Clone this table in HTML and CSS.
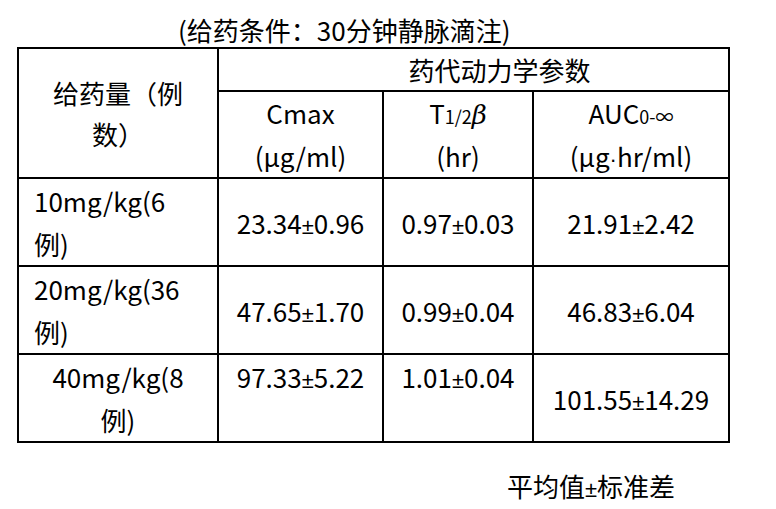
FILE: index.html
```html
<!DOCTYPE html>
<html lang="zh-CN">
<head>
    <meta charset="UTF-8">
    <meta name="viewport" content="width=device-width, initial-scale=1.0">
    <title>药代动力学参数</title>
    <link rel="stylesheet" href="styles.css">
</head>
<body>
    <div class="page">
        <div class="caption">(给药条件：30分钟静脉滴注)</div>

        <table class="pk-table">
            <colgroup>
                <col class="col-dose">
                <col class="col-cmax">
                <col class="col-half">
                <col class="col-auc">
            </colgroup>
            <tr class="head-top">
                <td rowspan="2" class="dose-head">给药量（例<br>数）</td>
                <td colspan="3" class="group-head">药代动力学参数</td>
            </tr>
            <tr class="head-sub">
                <td>Cmax<br>(μg/ml)</td>
                <td>T<span class="small">1/2</span><span class="beta">β</span><br>(hr)</td>
                <td>AUC<span class="small">0-∞</span><br>(μg<span class="sym">·</span>hr/ml)</td>
            </tr>
            <tr class="row">
                <td class="dose">10mg/kg(6<br>例)</td>
                <td>23.34<span class="sym">±</span>0.96</td>
                <td>0.97<span class="sym">±</span>0.03</td>
                <td>21.91<span class="sym">±</span>2.42</td>
            </tr>
            <tr class="row">
                <td class="dose">20mg/kg(36<br>例)</td>
                <td>47.65<span class="sym">±</span>1.70</td>
                <td>0.99<span class="sym">±</span>0.04</td>
                <td>46.83<span class="sym">±</span>6.04</td>
            </tr>
            <tr class="row">
                <td class="dose centered top">40mg/kg(8<br>例)</td>
                <td class="top">97.33<span class="sym">±</span>5.22</td>
                <td class="top">1.01<span class="sym">±</span>0.04</td>
                <td>101.55<span class="sym">±</span>14.29</td>
            </tr>
        </table>

        <div class="note">平均值<span class="sym">±</span>标准差</div>
    </div>
</body>
</html>
```

FILE: styles.css
```css
body {
    margin: 0;
    background: #fff;
    color: #000;
    font-family: "Noto Sans CJK SC", "Noto Sans", sans-serif;
    font-size: 26px;
}

.page {
    padding: 13px 0 0 17px;
}

.caption {
    line-height: 34px;
    padding-left: 161px;
}

.pk-table {
    border-collapse: collapse;
    table-layout: fixed;
    width: 711px;
}

.col-dose { width: 200px; }
.col-cmax { width: 165px; }
.col-half { width: 150px; }
.col-auc { width: 196px; }

.pk-table td {
    border: 2px solid #000;
    padding: 0;
    text-align: center;
    vertical-align: middle;
    line-height: 43px;
    white-space: nowrap;
}

.head-top td {
    line-height: 41px;
}

.head-sub td {
    line-height: 42.5px;
}

.group-head {
    text-indent: 2em;
}

.pk-table td.dose {
    text-align: left;
    padding-left: 15px;
}

.pk-table td.centered {
    text-align: center;
    padding-left: 0;
}

.pk-table td.top {
    vertical-align: top;
}

.small,
.sym,
.beta {
    line-height: 1;
}

.small {
    font-size: 18px;
}

.sym {
    font-family: "Liberation Sans", sans-serif;
    font-size: 22px;
}

.beta {
    font-family: "DejaVu Serif", serif;
    font-style: italic;
}

.note {
    margin-top: 21px;
    padding-left: 490px;
    line-height: 43px;
}
```
